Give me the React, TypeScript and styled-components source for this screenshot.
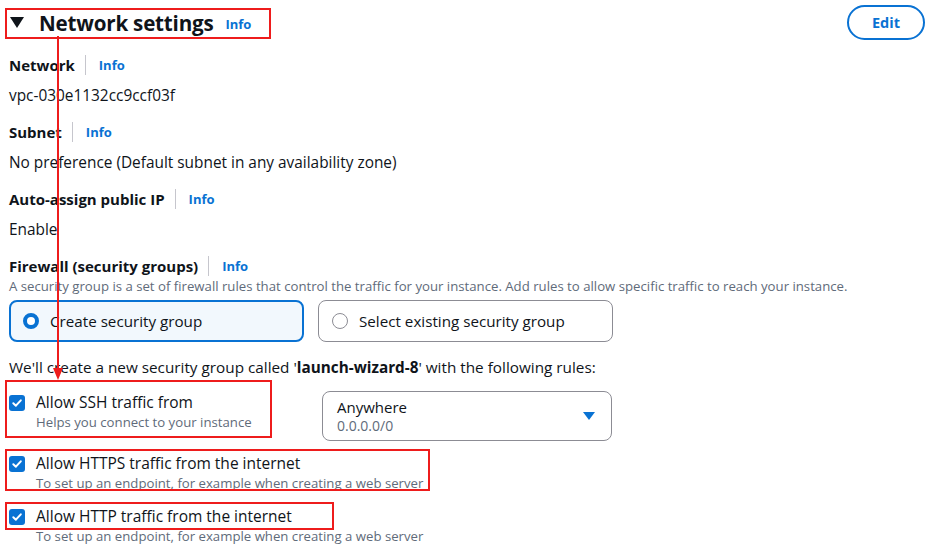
import React from "react";
import styled, { createGlobalStyle } from "styled-components";

const Global = createGlobalStyle`
  html, body { margin: 0; padding: 0; background: #ffffff; }
  body { font-family: "Open Sans", "Noto Sans", Arial, sans-serif; color: #0f141a; }
  * { box-sizing: border-box; }
`;

const Page = styled.div`
  position: relative;
  width: 940px;
  height: 548px;
  overflow: hidden;
  padding: 5px 15px 0 9px;
`;

const Header = styled.div`
  display: flex;
  align-items: center;
  justify-content: space-between;
  height: 35px;
`;

const TitleWrap = styled.div`
  display: flex;
  align-items: center;
  gap: 12px;
`;

const Caret = styled.span`
  width: 0;
  height: 0;
  margin-left: 1px;
  border-left: 7px solid transparent;
  border-right: 7px solid transparent;
  border-top: 11px solid #0f141a;
  margin-right: 3px;
`;

const Title = styled.h2`
  margin: 0;
  font-size: 20.6px;
  font-weight: 700;
  letter-spacing: -0.2px;
`;

const InfoLink = styled.a<{ $drop?: number }>`
  color: #0972d3;
  font-size: 13px;
  font-weight: 700;
  text-decoration: none;
  margin-top: ${(p) => p.$drop ?? 0}px;
`;

const EditButton = styled.button`
  height: 35px;
  width: 78px;
  border: 2px solid #0972d3;
  border-radius: 20px;
  background: #fff;
  color: #0972d3;
  font-family: inherit;
  font-weight: 700;
  font-size: 14.5px;
`;

const Fields = styled.div`
  display: flex;
  flex-direction: column;
  margin-top: 14px;
`;

const Field = styled.div`
  display: flex;
  flex-direction: column;
  gap: 9px;
  margin-bottom: 14px;
`;

const LabelRow = styled.div`
  display: flex;
  align-items: center;
  height: 22px;
`;

const Label = styled.span`
  font-size: 15px;
  font-weight: 700;
`;

const Divider = styled.span`
  width: 1px;
  height: 20px;
  background: #c6c6cd;
  margin: 0 13px 0 10px;
`;

const Value = styled.div`
  font-size: 15.4px;
  line-height: 22px;
`;

const Desc = styled.div`
  font-size: 13.2px;
  color: #5f6b7a;
  line-height: 18px;
  white-space: nowrap;
`;

const Tiles = styled.div`
  display: grid;
  grid-template-columns: 295px 295px;
  gap: 14px;
  margin-top: 5px;
`;

const Tile = styled.div<{ $selected?: boolean }>`
  height: 42px;
  border-radius: 8px;
  border: ${(p) => (p.$selected ? "2px solid #0972d3" : "1px solid #8c8c94")};
  background: ${(p) => (p.$selected ? "#f2f8fd" : "#fff")};
  display: flex;
  align-items: center;
  gap: 11px;
  padding-left: ${(p) => (p.$selected ? "12px" : "13px")};
  font-size: 15.2px;
`;

const Radio = styled.span<{ $checked?: boolean }>`
  width: 16px;
  height: 16px;
  border-radius: 50%;
  border: ${(p) => (p.$checked ? "4px solid #0972d3" : "1.5px solid #8c8c94")};
  background: #fff;
  flex-shrink: 0;
`;

const Notice = styled.div`
  font-size: 15.3px;
  margin-top: 15px;
  line-height: 20px;
`;

const Rules = styled.div`
  display: flex;
  flex-direction: column;
  margin-top: 15px;
`;

const RuleRow = styled.div<{ $gap: number }>`
  display: grid;
  grid-template-columns: 313px 290px;
  align-items: start;
  margin-bottom: ${(p) => p.$gap}px;
`;

const CheckLabel = styled.div`
  display: flex;
  gap: 11px;
`;

const Box = styled.span`
  width: 16px;
  height: 16px;
  border-radius: 3px;
  background: #0972d3;
  display: flex;
  align-items: center;
  justify-content: center;
  margin-top: 3px;
  flex-shrink: 0;
`;

const CheckText = styled.div`
  display: flex;
  flex-direction: column;
  gap: 1px;
`;

const CheckTitle = styled.span`
  font-size: 15.5px;
  line-height: 20px;
  white-space: nowrap;
`;

const Select = styled.div`
  width: 290px;
  height: 50px;
  border: 1px solid #8c8c94;
  border-radius: 8px;
  display: flex;
  align-items: center;
  justify-content: space-between;
  padding: 0 16px 0 14px;
  margin-top: -1px;
`;

const SelectText = styled.div`
  display: flex;
  flex-direction: column;
`;

const SelectValue = styled.span`
  font-size: 15px;
  line-height: 20px;
`;

const SelectSub = styled.span`
  font-size: 14px;
  line-height: 18px;
  color: #5f6b7a;
`;

const DropArrow = styled.span`
  width: 0;
  height: 0;
  border-left: 6px solid transparent;
  border-right: 6px solid transparent;
  border-top: 8px solid #0972d3;
`;

const RedBox = styled.div`
  position: absolute;
  border: 2px solid #ee1c1c;
  pointer-events: none;
`;

const ArrowSvg = styled.svg`
  position: absolute;
  left: 50px;
  top: 36px;
  pointer-events: none;
`;

const Check = () => (
  <Box>
    <svg width="12" height="12" viewBox="0 0 12 12">
      <path d="M2.3 6.2 L4.9 8.7 L9.8 3.3" fill="none" stroke="#fff" strokeWidth="2" strokeLinecap="round" strokeLinejoin="round" />
    </svg>
  </Box>
);

const fields = [
  { label: "Network", value: "vpc-030e1132cc9ccf03f" },
  { label: "Subnet", value: "No preference (Default subnet in any availability zone)" },
  { label: "Auto-assign public IP", value: "Enable" },
];

const rules = [
  { title: "Allow SSH traffic from", desc: "Helps you connect to your instance", gap: 12, select: true },
  { title: "Allow HTTPS traffic from the internet", desc: "To set up an endpoint, for example when creating a web server", gap: 14 },
  { title: "Allow HTTP traffic from the internet", desc: "To set up an endpoint, for example when creating a web server", gap: 0 },
];

export default function App() {
  return (
    <>
      <Global />
      <Page>
        <Header>
          <TitleWrap>
            <Caret />
            <Title>Network settings</Title>
            <InfoLink $drop={3}>Info</InfoLink>
          </TitleWrap>
          <EditButton>Edit</EditButton>
        </Header>
        <Fields>
          {fields.map((f) => (
            <Field key={f.label}>
              <LabelRow>
                <Label>{f.label}</Label>
                <Divider />
                <InfoLink>Info</InfoLink>
              </LabelRow>
              <Value>{f.value}</Value>
            </Field>
          ))}
          <LabelRow>
            <Label>Firewall (security groups)</Label>
            <Divider />
            <InfoLink>Info</InfoLink>
          </LabelRow>
          <Desc>
            A security group is a set of firewall rules that control the traffic for your instance. Add rules to allow specific traffic to reach your instance.
          </Desc>
          <Tiles>
            <Tile $selected>
              <Radio $checked />
              Create security group
            </Tile>
            <Tile>
              <Radio />
              Select existing security group
            </Tile>
          </Tiles>
          <Notice>
            We'll create a new security group called '<b>launch-wizard-8</b>' with the following rules:
          </Notice>
          <Rules>
            {rules.map((r) => (
              <RuleRow key={r.title} $gap={r.gap}>
                <CheckLabel>
                  <Check />
                  <CheckText>
                    <CheckTitle>{r.title}</CheckTitle>
                    <Desc>{r.desc}</Desc>
                  </CheckText>
                </CheckLabel>
                {r.select && (
                  <Select>
                    <SelectText>
                      <SelectValue>Anywhere</SelectValue>
                      <SelectSub>0.0.0.0/0</SelectSub>
                    </SelectText>
                    <DropArrow />
                  </Select>
                )}
              </RuleRow>
            ))}
          </Rules>
        </Fields>
        <RedBox style={{ left: 5, top: 8, width: 266, height: 31 }} />
        <RedBox style={{ left: 5, top: 380, width: 267, height: 58 }} />
        <RedBox style={{ left: 5, top: 449, width: 425, height: 42 }} />
        <RedBox style={{ left: 5, top: 502, width: 329, height: 28 }} />
        <ArrowSvg width="16" height="346" viewBox="0 0 16 346">
          <line x1="8" y1="0" x2="8" y2="334" stroke="#ee1c1c" strokeWidth="2" />
          <polygon points="3,332 13,332 8,344" fill="#ee1c1c" />
        </ArrowSvg>
      </Page>
    </>
  );
}
